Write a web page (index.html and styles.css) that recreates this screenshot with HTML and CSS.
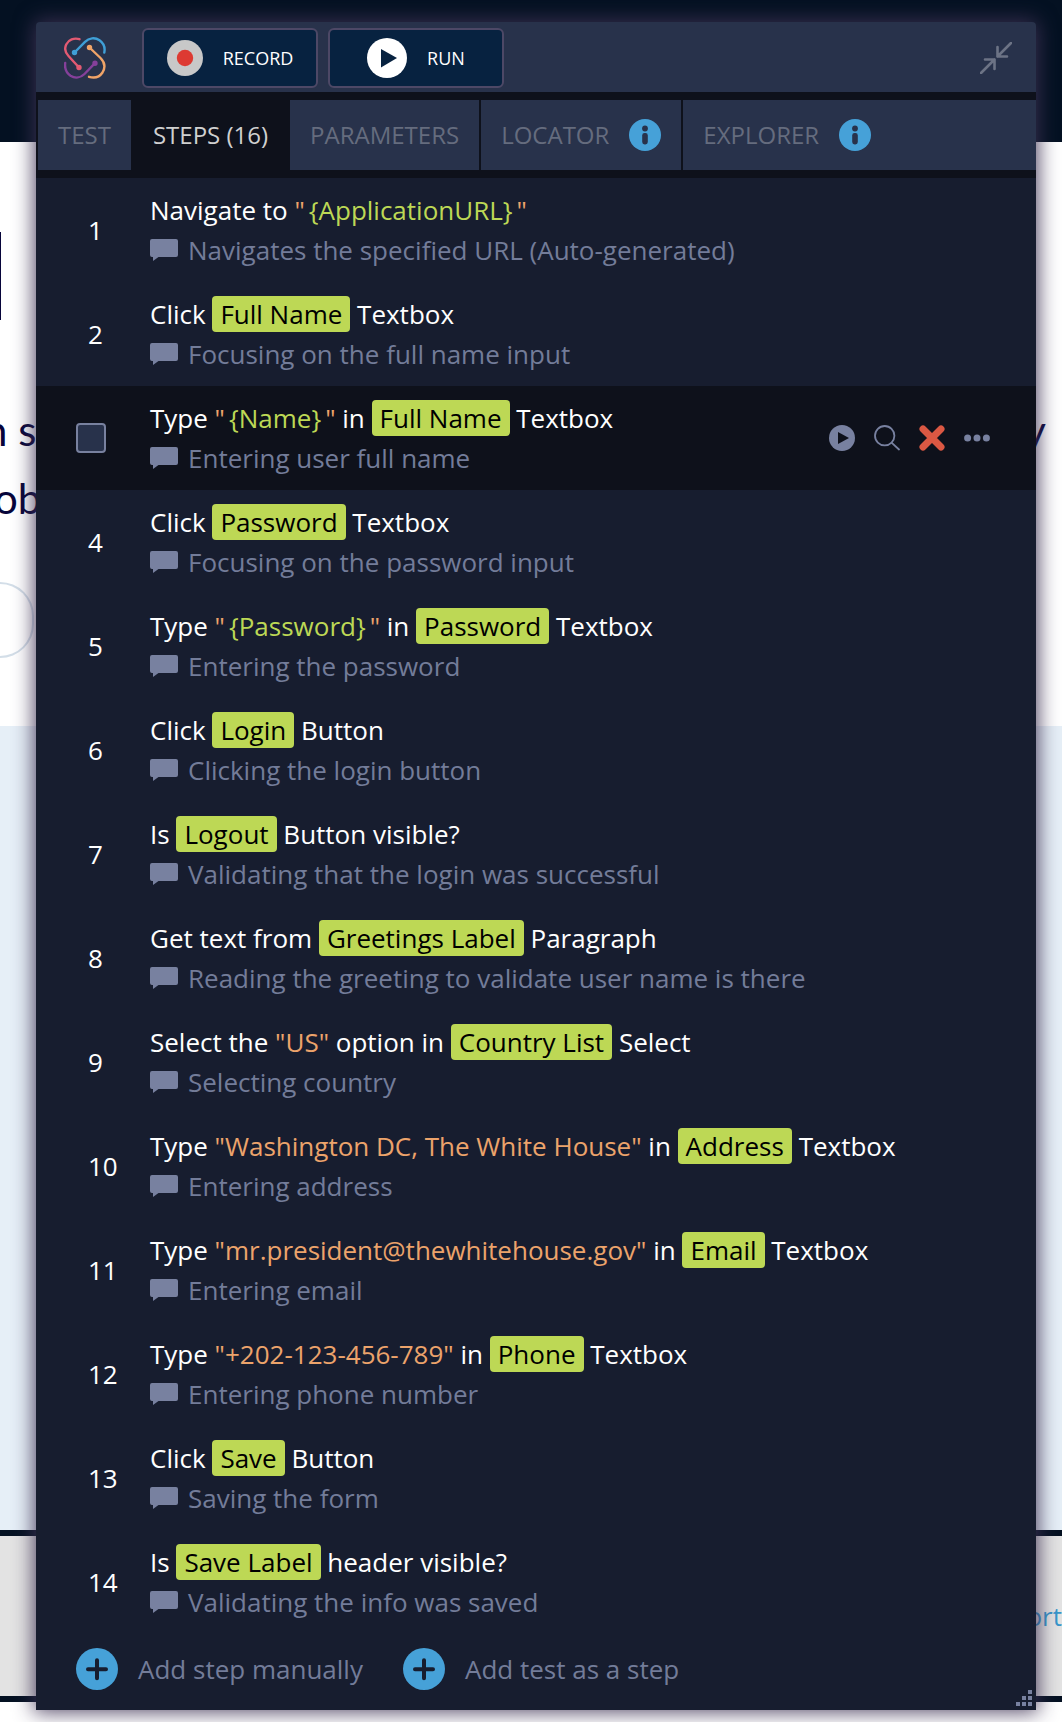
FILE: index.html
```html
<!DOCTYPE html>
<html lang="en">
<head>
<meta charset="utf-8">
<meta name="viewport" content="width=device-width, initial-scale=1">
<title>Test steps</title>
<link rel="stylesheet" href="styles.css">
</head>
<body>
<svg class="defs" aria-hidden="true">
  <symbol id="comment" viewBox="0 0 28 22"><path d="M2 0H26Q28 0 28 2V16Q28 18 26 18H8.500L3 22V18H2Q0 18 0 16V2Q0 0 2 0Z" fill="currentColor"/></symbol>
  <symbol id="info" viewBox="0 0 32 32"><circle cx="16" cy="16" r="16" fill="#46a1d8"/><circle cx="16" cy="9.500" r="2.900" fill="#28324b"/><rect x="13.200" y="14" width="5.600" height="11.500" rx="2.400" fill="#28324b"/></symbol>
  <symbol id="plus" viewBox="0 0 42 42"><circle cx="21" cy="21" r="21" fill="#46a1d8"/><path d="M21 12.200V30.200M12 21.200H30" stroke="#171d2f" stroke-width="4" stroke-linecap="round"/></symbol>
</svg>

<div class="site">
  <div class="site-top"></div>
  <section class="site-hero">
    <div class="site-title"></div>
    <p class="site-line site-line-first"><span>n s</span><span>y</span></p>
    <p class="site-line">ob</p>
    <div class="site-field"></div>
  </section>
  <div class="site-band"></div>
  <footer class="site-footer"><a href="#support">ort</a></footer>
</div>

<main class="panel">
  <header class="toolbar">
    <svg class="logo" viewBox="0 0 42 42" fill="none" stroke-width="2.400" stroke-linecap="round">
      <path d="M15.500 2.200C10 .5 4.500 2.800 2.200 7.500C.2 12 1.500 16 4.500 19L15 30.500" stroke="#e25a72"/>
      <circle cx="15" cy="30.500" r="1.500" fill="#e25a72" stroke="#e25a72"/>
      <path d="M10.500 15.500L21 4.800C25 .8 31 .2 35.500 3.200C39.500 6 41.300 10.500 40.300 15.500" stroke="#3f9fd6"/>
      <circle cx="10.500" cy="15.500" r="1.500" fill="#3f9fd6" stroke="#3f9fd6"/>
      <path d="M25.500 10.500L36.500 21C40.500 25 41.500 30.500 38.500 35.500C35.500 40 30.500 41.500 25 39.800" stroke="#f0a468"/>
      <circle cx="25.500" cy="10.500" r="1.500" fill="#f0a468" stroke="#f0a468"/>
      <path d="M1.200 26C.5 31.500 2.500 36 6.500 38.800C11 41.500 16.500 41 20.500 37L31 26.200" stroke="#85409a"/>
      <circle cx="31" cy="26.200" r="1.500" fill="#85409a" stroke="#85409a"/>
    </svg>
    <button class="action" type="button">
      <svg width="36" height="36" viewBox="0 0 36 36"><circle cx="18" cy="18" r="18" fill="#c8c8c8"/><circle cx="18" cy="18" r="8.200" fill="#dd3a32"/></svg>
      RECORD
    </button>
    <button class="action" type="button">
      <svg width="40" height="40" viewBox="0 0 40 40"><circle cx="20" cy="20" r="20" fill="#fff"/><path d="M14 11V29.500L30 20Z" fill="#072240"/></svg>
      RUN
    </button>
    <button class="collapse" type="button" aria-label="Collapse">
      <svg width="32" height="32" viewBox="0 0 32 32" fill="none" stroke="currentColor" stroke-width="2.600" stroke-linecap="round" stroke-linejoin="round"><path d="M31 1L17.500 14.500M17.500 5V14.500H27M1 31L14.500 17.500M5 17.500H14.500V27"/></svg>
    </button>
  </header>

  <nav class="tabs">
    <button class="tab" type="button">TEST</button>
    <button class="tab tab-active" type="button">STEPS (16)</button>
    <button class="tab" type="button">PARAMETERS</button>
    <button class="tab" type="button">LOCATOR <svg width="32" height="32"><use href="#info"/></svg></button>
    <button class="tab tab-last" type="button">EXPLORER <svg width="32" height="32"><use href="#info"/></svg></button>
  </nav>

  <ol class="steps">
    <li class="step"><span class="num">1</span><div class="text"><p>Navigate to <span class="str">"<span class="var">{ApplicationURL}</span>"</span></p><p class="note"><svg><use href="#comment"/></svg>Navigates the specified URL (Auto-generated)</p></div></li>
    <li class="step"><span class="num">2</span><div class="text"><p>Click <span class="el">Full Name</span> Textbox</p><p class="note"><svg><use href="#comment"/></svg>Focusing on the full name input</p></div></li>
    <li class="step step-hover">
      <input class="pick" type="checkbox" aria-label="Select step 3">
      <div class="text"><p>Type <span class="str">"<span class="var">{Name}</span>"</span> in <span class="el">Full Name</span> Textbox</p><p class="note"><svg><use href="#comment"/></svg>Entering user full name</p></div>
      <div class="tools">
        <button type="button" aria-label="Run step"><svg viewBox="0 0 26 26"><circle cx="13" cy="13" r="13" fill="currentColor"/><path d="M9 7V19L20 13Z" fill="#0e111b"/></svg></button>
        <button type="button" aria-label="Find element"><svg viewBox="0 0 26 26" fill="none" stroke="currentColor" stroke-width="1.800" stroke-linecap="round"><circle cx="10.700" cy="10.700" r="9.700"/><path d="M17.800 17.800L25 24.500"/></svg></button>
        <button type="button" aria-label="Delete step"><svg viewBox="0 0 26 26"><path d="M4 4L22 22M22 4L4 22" stroke="#db5843" stroke-width="7" stroke-linecap="round"/></svg></button>
        <button type="button" aria-label="More"><svg viewBox="0 0 26 26" fill="currentColor"><circle cx="3.600" cy="13" r="3.500"/><circle cx="13" cy="13" r="3.500"/><circle cx="22.400" cy="13" r="3.500"/></svg></button>
      </div>
    </li>
    <li class="step"><span class="num">4</span><div class="text"><p>Click <span class="el">Password</span> Textbox</p><p class="note"><svg><use href="#comment"/></svg>Focusing on the password input</p></div></li>
    <li class="step"><span class="num">5</span><div class="text"><p>Type <span class="str">"<span class="var">{Password}</span>"</span> in <span class="el">Password</span> Textbox</p><p class="note"><svg><use href="#comment"/></svg>Entering the password</p></div></li>
    <li class="step"><span class="num">6</span><div class="text"><p>Click <span class="el">Login</span> Button</p><p class="note"><svg><use href="#comment"/></svg>Clicking the login button</p></div></li>
    <li class="step"><span class="num">7</span><div class="text"><p>Is <span class="el">Logout</span> Button visible?</p><p class="note"><svg><use href="#comment"/></svg>Validating that the login was successful</p></div></li>
    <li class="step"><span class="num">8</span><div class="text"><p>Get text from <span class="el">Greetings Label</span> Paragraph</p><p class="note"><svg><use href="#comment"/></svg>Reading the greeting to validate user name is there</p></div></li>
    <li class="step"><span class="num">9</span><div class="text"><p>Select the <span class="str">"US"</span> option in <span class="el">Country List</span> Select</p><p class="note"><svg><use href="#comment"/></svg>Selecting country</p></div></li>
    <li class="step"><span class="num">10</span><div class="text"><p>Type <span class="str">"Washington DC, The White House"</span> in <span class="el">Address</span> Textbox</p><p class="note"><svg><use href="#comment"/></svg>Entering address</p></div></li>
    <li class="step"><span class="num">11</span><div class="text"><p>Type <span class="str">"mr.president@thewhitehouse.gov"</span> in <span class="el">Email</span> Textbox</p><p class="note"><svg><use href="#comment"/></svg>Entering email</p></div></li>
    <li class="step"><span class="num">12</span><div class="text"><p>Type <span class="str">"+202-123-456-789"</span> in <span class="el">Phone</span> Textbox</p><p class="note"><svg><use href="#comment"/></svg>Entering phone number</p></div></li>
    <li class="step"><span class="num">13</span><div class="text"><p>Click <span class="el">Save</span> Button</p><p class="note"><svg><use href="#comment"/></svg>Saving the form</p></div></li>
    <li class="step"><span class="num">14</span><div class="text"><p>Is <span class="el">Save Label</span> header visible?</p><p class="note"><svg><use href="#comment"/></svg>Validating the info was saved</p></div></li>
  </ol>

  <div class="adders">
    <button class="add" type="button"><svg width="42" height="42"><use href="#plus"/></svg>Add step manually</button>
    <button class="add" type="button"><svg width="42" height="42"><use href="#plus"/></svg>Add test as a step</button>
  </div>
  <svg class="grip" viewBox="0 0 16 16" fill="currentColor" aria-hidden="true"><path d="M12 0h4v4h-4zM6 6h4v4H6zM12 6h4v4h-4zM0 12h4v4H0zM6 12h4v4H6zM12 12h4v4h-4z"/></svg>
</main>
</body>
</html>
```
FILE: styles.css
```css
* { box-sizing: border-box; }

body {
  margin: 0;
  position: relative;
  background: #fff;
  color: #fff;
  font: 26px/40px "Open Sans", "Noto Sans", sans-serif;
}

p, ol { margin: 0; padding: 0; }

button {
  margin: 0;
  padding: 0;
  border: 0;
  background: none;
  color: inherit;
  font: inherit;
  cursor: pointer;
}

svg { display: block; flex: none; }

.defs { display: none; }

/* Page under the floating panel */

.site { overflow: hidden; padding-bottom: 20px; color: #07053a; }

.site-top { height: 142px; background: #041122; }

.site-hero {
  height: 584px;
  padding-top: 90px;
  font: 42px/68px Lato, sans-serif;
}

.site-title {
  width: 1px;
  height: 88px;
  margin-bottom: 76px;
  background: #07053a;
}

.site-line { margin-left: -6px; }

.site-line-first {
  display: flex;
  justify-content: space-between;
  margin: 0 16px 0 -16px;
}

.site-field {
  width: 34px;
  height: 76px;
  margin-top: 50px;
  border: 2px solid #d3dee8;
  border-left: 0;
  border-radius: 0 38px 38px 0;
}

.site-band { height: 804px; background: #e6eff7; }

.site-footer {
  height: 172px;
  padding-top: 60px;
  border: solid #041122;
  border-width: 6px 0;
  background: #e3e3e3;
  text-align: right;
}

.site-footer a { color: #3896cb; text-decoration: none; }

/* Panel */

.panel {
  position: absolute;
  top: 22px;
  left: 36px;
  right: 26px;
  background: #171d2f;
  border-radius: 4px 4px 0 0;
  box-shadow: 0 0 20px 2px rgba(62, 50, 84, 0.9);
}

.toolbar {
  display: flex;
  align-items: center;
  height: 70px;
  padding: 2px 24px 0 28px;
  border-radius: 4px 4px 0 0;
  background: #28324b;
}

.logo { width: 42px; height: 42px; margin-right: 36px; }

.action {
  display: flex;
  align-items: center;
  justify-content: center;
  gap: 20px;
  width: 176px;
  height: 60px;
  margin-right: 10px;
  border: 2px solid #4d4866;
  border-radius: 6px;
  background: #072240;
  font-size: 18px;
  font-weight: 500;
}

.collapse { margin-left: auto; color: #6c7385; }

.tabs {
  display: flex;
  gap: 2px;
  padding: 8px 0 8px 2px;
  background: #0e111b;
}

.tab {
  display: flex;
  align-items: center;
  gap: 20px;
  height: 70px;
  padding: 0 20px;
  background: #28324b;
  color: #656c7e;
  font-size: 24px;
}

.tab-active { background: #0e111b; color: #d0d0d0; font-weight: 500; }
.tab-last { flex: 1; }

.steps { list-style: none; }

.step { display: flex; align-items: center; padding: 12px 46px 12px 40px; }

.step-hover { background: #0e111b; }

.num { width: 74px; padding-left: 12px; }

.pick {
  appearance: none;
  width: 30px;
  height: 30px;
  margin: 0 44px 0 0;
  border: 2px solid #78819f;
  border-radius: 4px;
  background: #28324b;
}

.text { flex: 1; font-weight: 500; }

.str { color: #eca36b; font-weight: 400; }

.var { padding: 0 4px; color: #bdd855; }

.el {
  padding: 0 8px;
  border-radius: 4px;
  background: #bdd855;
  color: #000;
  font-weight: 400;
}

.note {
  display: flex;
  align-items: center;
  gap: 10px;
  color: #737c99;
  font-weight: 400;
}

.note svg { width: 28px; height: 22px; color: #7881a0; }

.tools { display: flex; gap: 19px; color: #7881a0; }

.tools svg { width: 26px; height: 26px; }

.adders {
  display: flex;
  gap: 40px;
  padding: 14px 40px 20px;
  color: #737c99;
}

.add { display: flex; align-items: center; gap: 20px; }

.grip {
  position: absolute;
  right: 4px;
  bottom: 4px;
  width: 16px;
  height: 16px;
  color: #7881a0;
}
```
